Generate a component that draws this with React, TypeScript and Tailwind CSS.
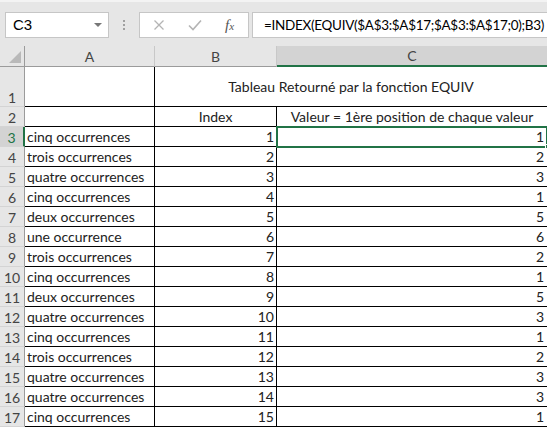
const colA = [
  "cinq occurrences",
  "trois occurrences",
  "quatre occurrences",
  "cinq occurrences",
  "deux occurrences",
  "une occurrence",
  "trois occurrences",
  "cinq occurrences",
  "deux occurrences",
  "quatre occurrences",
  "cinq occurrences",
  "trois occurrences",
  "quatre occurrences",
  "quatre occurrences",
  "cinq occurrences",
];
const colC = [1, 2, 3, 1, 5, 6, 2, 1, 5, 3, 1, 2, 3, 3, 1];

const cellFont = { fontFamily: "Lato, 'Liberation Sans', sans-serif" };

function RowHead({ n, h, selected }: { n: number; h: string; selected?: boolean }) {
  return (
    <div
      className={`w-[25px] shrink-0 ${h} flex items-end justify-center pb-[1px] text-[14px] leading-none border-b border-[#d4d4d4] ${
        selected
          ? "bg-[#d3d3d3] text-[#217346] border-r-2 border-r-[#217346]"
          : "bg-[#e6e6e6] text-[#444] border-r border-r-[#9b9b9b]"
      }`}
    >
      {n}
    </div>
  );
}

export default function App() {
  return (
    <div className="w-[547px] h-[428px] overflow-hidden bg-white text-[#222]" style={cellFont}>
      {/* formula bar */}
      <div className="h-[46px] bg-[#e6e6e6] border-t-[2px] border-t-[#f3f3f3] flex items-start pt-[10px]">
        <div className="ml-[5px] w-[104px] shrink-0 h-[26px] bg-white border border-[#c6c6c6] flex items-center justify-between pl-[7px] pr-[5px]">
          <span className="text-[15px] text-black" style={{ fontFamily: "'Liberation Sans', sans-serif" }}>C3</span>
          <svg width="10" height="6" viewBox="0 0 10 6">
            <path d="M1 1h8L5 5z" fill="#777" />
          </svg>
        </div>
        <div className="w-[30px] shrink-0 h-[26px] flex flex-col items-center justify-center gap-[2px]">
          <span className="w-[2px] h-[2px] bg-[#a0a0a0]" />
          <span className="w-[2px] h-[2px] bg-[#a0a0a0]" />
          <span className="w-[2px] h-[2px] bg-[#a0a0a0]" />
        </div>
        <div className="w-[110px] shrink-0 h-[26px] bg-white border border-[#c6c6c6] flex items-center">
          <svg className="ml-[13px]" width="12" height="12" viewBox="0 0 12 12">
            <path d="M1.5 1.5l9 9M10.5 1.5l-9 9" stroke="#b4b4b4" strokeWidth="1.3" />
          </svg>
          <svg className="ml-[23px]" width="14" height="12" viewBox="0 0 14 12">
            <path d="M1 6.5l4 4L13 1.5" stroke="#b4b4b4" strokeWidth="1.6" fill="none" />
          </svg>
          <span
            className="ml-[23px] text-[15px] italic text-[#555]"
            style={{ fontFamily: "'Liberation Serif', serif" }}
          >
            f<span className="text-[11px]">x</span>
          </span>
        </div>
        <div className="ml-[3px] flex-1 min-w-0 overflow-hidden h-[26px] bg-white border border-[#c6c6c6] border-r-0 flex items-center pl-[11px]">
          <span className="text-[13.5px] text-black whitespace-nowrap" style={{ fontFamily: "Lato, 'Liberation Sans', sans-serif", letterSpacing: "-0.3px" }}>
            =INDEX(EQUIV($A$3:$A$17;$A$3:$A$17;0);B3)
          </span>
        </div>
      </div>

      {/* column headers */}
      <div className="flex h-[21px] bg-[#e6e6e6] text-[14px] text-[#444]">
        <div className="w-[25px] shrink-0 border-r border-[#9b9b9b] border-b border-b-[#9b9b9b] flex items-end justify-end pr-[3px] pb-[3px]">
          <svg width="12" height="12" viewBox="0 0 12 12">
            <path d="M12 0v12H0z" fill="#b9b9b9" />
          </svg>
        </div>
        <div className="w-[130px] shrink-0 border-r border-[#c8c8c8] border-b border-b-[#9b9b9b] flex items-center justify-center">A</div>
        <div className="w-[122px] shrink-0 border-r border-[#c8c8c8] border-b border-b-[#9b9b9b] flex items-center justify-center">B</div>
        <div className="flex-1 bg-[#d3d3d3] border-b-2 border-b-[#217346] flex items-center justify-center">C</div>
      </div>

      {/* row 1 */}
      <div className="flex text-[14px]">
        <RowHead n={1} h="h-[40px]" />
        <div className="w-[130px] h-[40px] shrink-0 border-r border-b border-black" />
        <div className="flex-1 h-[40px] border-b border-black flex items-center justify-center pb-[1px]">
          Tableau Retourné par la fonction EQUIV
        </div>
      </div>

      {/* row 2 */}
      <div className="flex text-[14px]">
        <RowHead n={2} h="h-[20px]" />
        <div className="w-[130px] h-[20px] shrink-0 border-r border-b border-black" />
        <div className="w-[122px] h-[20px] shrink-0 border-r border-b border-black flex items-end justify-center leading-none pb-[2px]">Index</div>
        <div className="flex-1 h-[20px] border-b border-black flex items-end justify-center leading-none pb-[2px]">
          Valeur = 1ère position de chaque valeur
        </div>
      </div>

      {/* data rows */}
      {colA.map((label, i) => (
        <div key={i} className="flex text-[14px]">
          <RowHead n={i + 3} h="h-[20px]" selected={i === 0} />
          <div className="w-[130px] h-[20px] shrink-0 border-r border-b border-black flex items-end pl-[2px] leading-none pb-[2px] whitespace-nowrap">
            {label}
          </div>
          <div className="w-[122px] h-[20px] shrink-0 border-r border-b border-black flex items-end justify-end pr-[2px] leading-none pb-[2px]">
            {i + 1}
          </div>
          <div
            className={`relative flex-1 h-[20px] border-b border-black flex items-end justify-end pr-[3px] leading-none pb-[2px] ${
              i === 0 ? "outline-2 outline-[#217346] -outline-offset-1" : ""
            }`}
          >
            {colC[i]}
            {i === 0 && <span className="absolute right-[-3px] bottom-[-3px] w-[5px] h-[5px] bg-[#217346] border border-white" />}
          </div>
        </div>
      ))}
    </div>
  );
}
